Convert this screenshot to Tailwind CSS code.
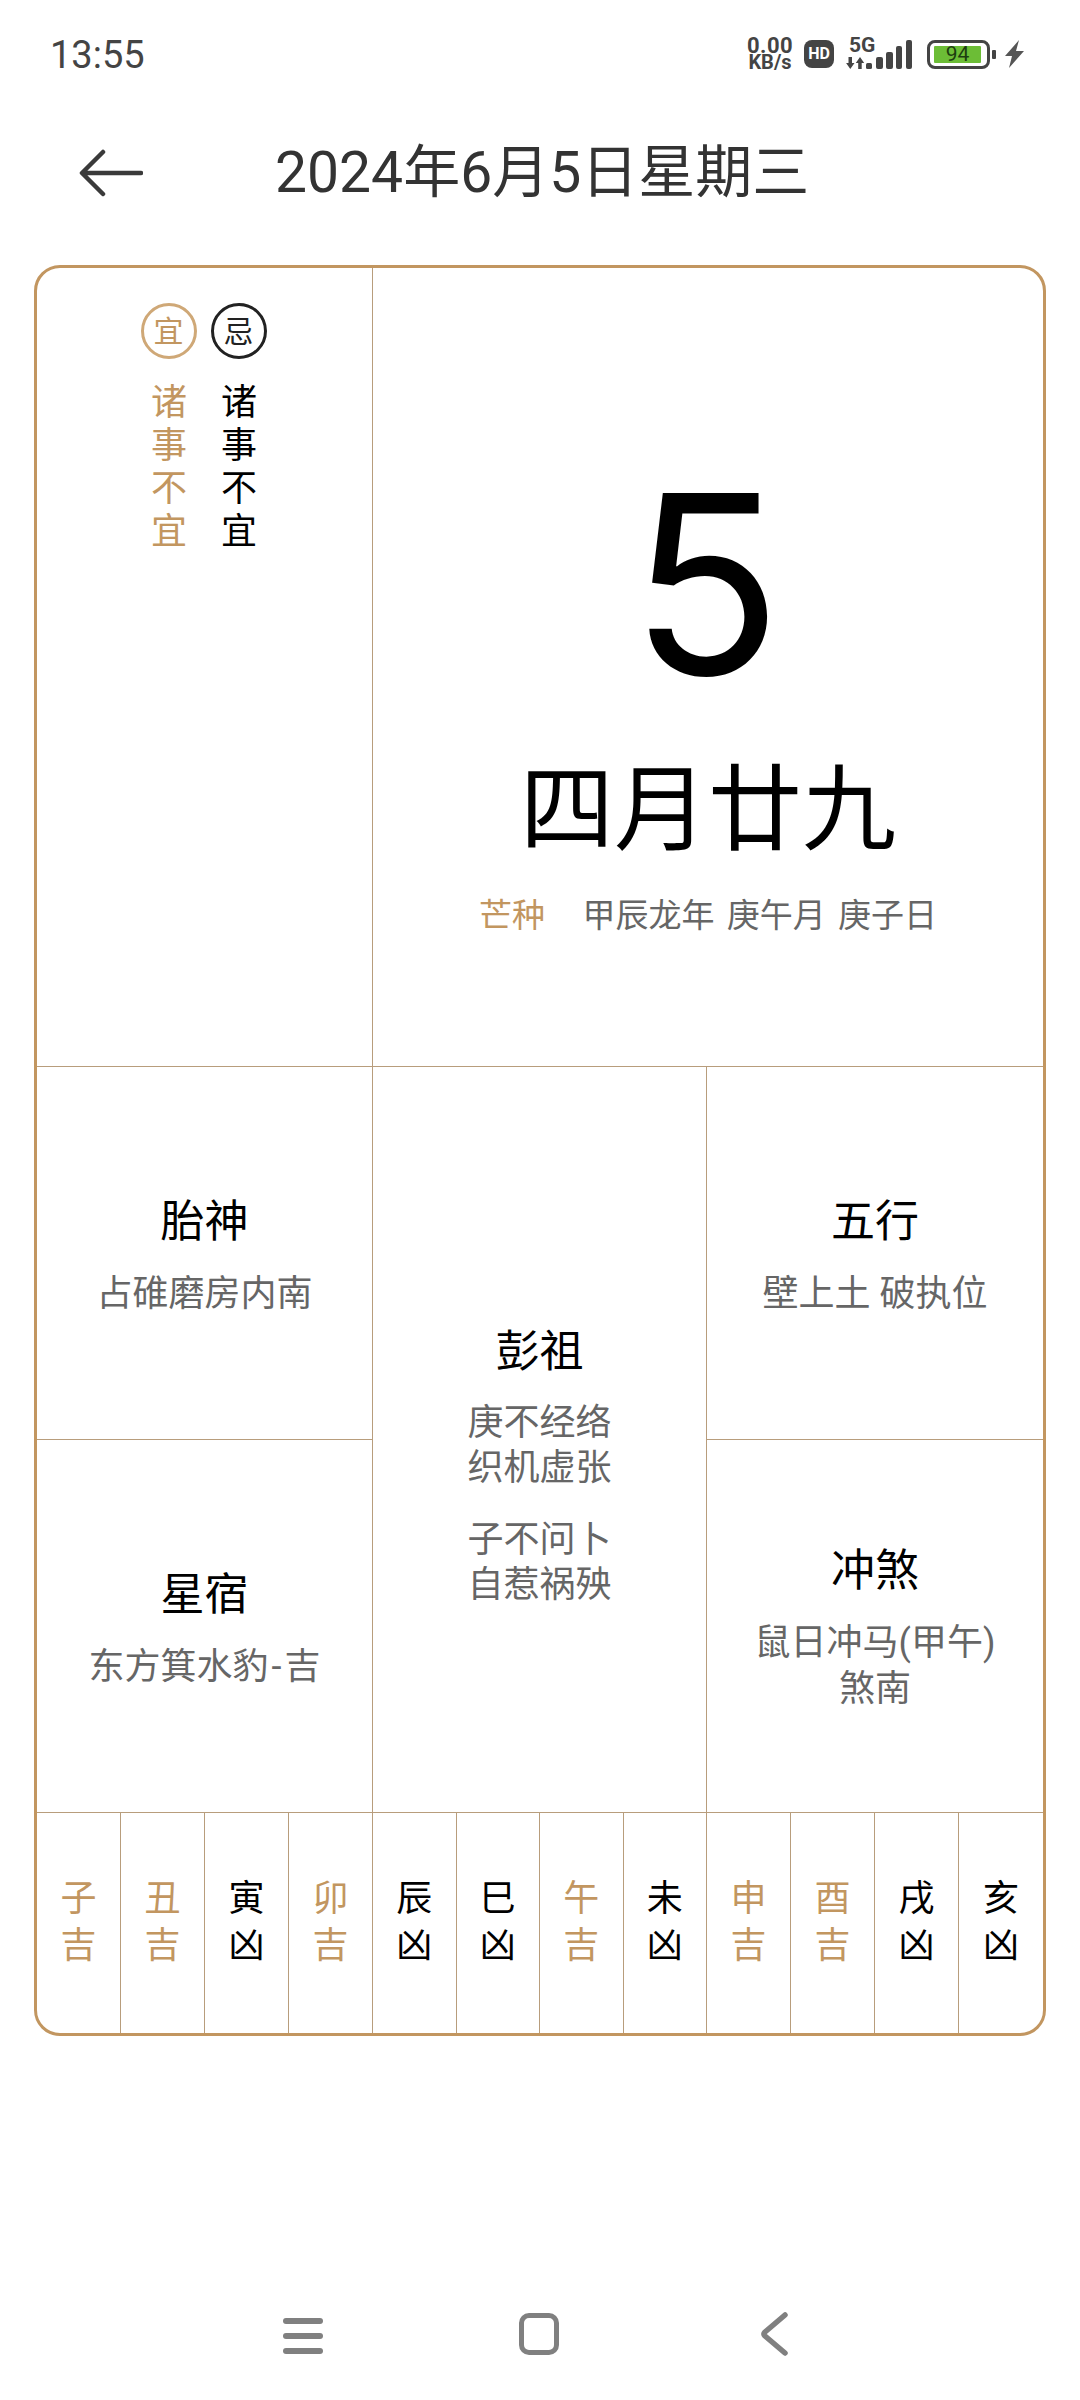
<!DOCTYPE html>
<html lang="zh-CN">
<head>
  <meta charset="UTF-8" />
  <title>黄历</title>
  <script src="https://cdn.jsdelivr.net/npm/@tailwindcss/browser@4"></script>
</head>
<body class="bg-white w-[1080px] h-[2400px] overflow-hidden flex flex-col font-['Roboto','Noto_Sans_CJK_SC',sans-serif]">
  <!-- Status bar -->
  <header class="h-[108px] shrink-0 pl-[50px] pr-[56px] flex justify-between items-center text-[#444]">
    <span class="text-[38px] leading-none mt-[1px]">13:55</span>
    <div class="flex items-center">
      <div class="w-[48px] flex flex-col items-center font-bold leading-[17px] mr-[10px]"><span class="text-[22px] tracking-[0.5px]">0.00</span><span class="text-[20px]">KB/s</span></div>
      <span class="w-[30px] h-[28px] rounded-[8px] bg-[#444] text-white text-[16px] font-bold flex items-center justify-center mr-[12px]">HD</span>
      <svg width="67" height="38" viewBox="0 -6 67 38" class="mr-[14px] -mt-[6px]" fill="#444">
        <text x="3" y="14" font-size="21" font-weight="700" font-family="Roboto">5G</text>
        <path d="M2.5 19H6v6h2.5l-4.2 6-4.2-6h2.4zM14 19l4.2 6h-2.5v6h-3.5v-6h-2.4z"/>
        <rect x="20" y="25" width="6" height="6" rx="1.5"/><rect x="30" y="19" width="7" height="12" rx="2"/><rect x="40" y="14" width="7" height="17" rx="2"/><rect x="50" y="8" width="6" height="23" rx="2"/><rect x="60" y="2" width="6" height="29" rx="2"/>
      </svg>
      <div class="w-[63px] h-[29px] border-[3px] border-[#444] rounded-[8px] px-[4px] py-[3px] mr-[2px]">
        <div class="w-[47px] h-full rounded-[1px] bg-[#6cbd36] text-[#1d3d10] text-[21px] leading-none flex items-center justify-center">94</div>
      </div>
      <div class="w-[4px] h-[9px] rounded-[1px] bg-[#444] mr-[9px]"></div>
      <svg width="19" height="28" viewBox="0 0 19 28" fill="#555"><path d="M14 0L0 16h7L4 28l15-17h-8z"/></svg>
    </div>
  </header>

  <!-- Title -->
  <nav class="h-[157px] shrink-0 flex items-start">
    <svg width="64" height="48" viewBox="0 0 64 48" class="ml-[79px] mt-[41px]" fill="none" stroke="#3a3a3a" stroke-width="4.5" stroke-linecap="round" stroke-linejoin="round">
      <path d="M62 24H4M24 3L3 24l21 21"/>
    </svg>
    <h1 class="ml-[132px] mt-[28px] text-[57px] leading-[74px] text-[#333] font-normal whitespace-nowrap">2024年6月5日星期三</h1>
  </nav>

  <!-- Almanac card -->
  <main class="ml-[34px] w-[1012px] h-[1771px] shrink-0 border-[3px] border-[#c29660] rounded-[26px] overflow-hidden flex flex-col">
    <section class="h-[799px] shrink-0 flex border-b border-[#b89d7c]">
      <div class="w-[336px] shrink-0 border-r border-[#b89d7c] pt-[35px] flex flex-col items-center">
        <div class="flex gap-[14px] mr-[2px]">
          <span class="w-[56px] h-[56px] rounded-full border-[3px] border-[#cfa877] text-[#c29660] text-[30px] flex items-center justify-center">宜</span>
          <span class="w-[56px] h-[56px] rounded-full border-[3px] border-[#222] text-[#222] text-[30px] flex items-center justify-center">忌</span>
        </div>
        <div class="flex gap-[34px] mt-[23px] mr-[1px] text-[36px] leading-[43px]">
          <div class="w-[36px] text-[#c29660]">诸<br>事<br>不<br>宜</div>
          <div class="w-[36px] text-black">诸<br>事<br>不<br>宜</div>
        </div>
      </div>
      <div class="flex-1 flex flex-col items-center">
        <div class="mt-[185px] mr-[4px] text-[250px] leading-[262px] text-black font-['Inter',sans-serif] font-normal">5</div>
        <div class="mt-[36px] text-[94px] leading-[120px] text-black">四月廿九</div>
        <div class="mt-[20px] text-[33px] leading-[50px] text-[#666] whitespace-pre [word-spacing:4px]"><span class="text-[#c29660] mr-[1px]">芒种</span>   甲辰龙年 庚午月 庚子日</div>
      </div>
    </section>

    <section class="h-[746px] shrink-0 flex border-b border-[#b89d7c]">
      <div class="w-[336px] shrink-0 border-r border-[#b89d7c] flex flex-col">
        <div class="h-[373px] border-b border-[#b89d7c] pt-[5px] flex flex-col items-center justify-center">
          <h2 class="text-[44px] leading-[60px] text-black">胎神</h2>
          <p class="mt-[17px] text-[36px] leading-[50px] text-[#666]">占碓磨房内南</p>
        </div>
        <div class="flex-1 pt-[5px] flex flex-col items-center justify-center">
          <h2 class="text-[44px] leading-[60px] text-black">星宿</h2>
          <p class="mt-[17px] text-[36px] leading-[50px] text-[#666]">东方箕水豹<span class="px-[3px]">-</span>吉</p>
        </div>
      </div>
      <div class="w-[334px] shrink-0 border-r border-[#b89d7c] flex flex-col items-center justify-center text-center pt-[50px]">
        <h2 class="text-[44px] leading-[60px] text-black">彭祖</h2>
        <p class="mt-[19px] text-[36px] leading-[45px] text-[#666]">庚不经络<br>织机虚张</p>
        <p class="mt-[27px] text-[36px] leading-[45px] text-[#666]">子不问卜<br>自惹祸殃</p>
      </div>
      <div class="flex-1 flex flex-col">
        <div class="h-[373px] border-b border-[#b89d7c] pt-[5px] flex flex-col items-center justify-center">
          <h2 class="text-[44px] leading-[60px] text-black">五行</h2>
          <p class="mt-[17px] text-[36px] leading-[50px] text-[#666]">壁上土 破执位</p>
        </div>
        <div class="flex-1 flex flex-col items-center justify-center text-center">
          <h2 class="text-[44px] leading-[60px] text-black">冲煞</h2>
          <p class="mt-[19px] text-[36px] leading-[46px] text-[#666]">鼠日冲马(甲午)<br>煞南</p>
        </div>
      </div>
    </section>

    <section class="flex-1 grid grid-cols-[repeat(4,84px)_repeat(4,83.5px)_repeat(4,1fr)] text-[36px] leading-[47px] text-center">
      <div class="border-r border-[#b89d7c] flex items-center justify-center text-[#c29660]">子<br>吉</div>
      <div class="border-r border-[#b89d7c] flex items-center justify-center text-[#c29660]">丑<br>吉</div>
      <div class="border-r border-[#b89d7c] flex items-center justify-center text-black">寅<br>凶</div>
      <div class="border-r border-[#b89d7c] flex items-center justify-center text-[#c29660]">卯<br>吉</div>
      <div class="border-r border-[#b89d7c] flex items-center justify-center text-black">辰<br>凶</div>
      <div class="border-r border-[#b89d7c] flex items-center justify-center text-black">巳<br>凶</div>
      <div class="border-r border-[#b89d7c] flex items-center justify-center text-[#c29660]">午<br>吉</div>
      <div class="border-r border-[#b89d7c] flex items-center justify-center text-black">未<br>凶</div>
      <div class="border-r border-[#b89d7c] flex items-center justify-center text-[#c29660]">申<br>吉</div>
      <div class="border-r border-[#b89d7c] flex items-center justify-center text-[#c29660]">酉<br>吉</div>
      <div class="border-r border-[#b89d7c] flex items-center justify-center text-black">戌<br>凶</div>
      <div class="flex items-center justify-center text-black">亥<br>凶</div>
    </section>
  </main>

  <!-- Navigation bar -->
  <footer class="flex-1 relative">
    <div class="absolute left-[283px] top-[282px] w-[40px] flex flex-col gap-[9px]">
      <div class="h-[6px] rounded-full bg-[#808080]"></div>
      <div class="h-[6px] rounded-full bg-[#808080]"></div>
      <div class="h-[6px] rounded-full bg-[#808080]"></div>
    </div>
    <div class="absolute left-[519px] top-[277px] w-[40px] h-[42px] border-[5px] border-[#808080] rounded-[10px]"></div>
    <svg class="absolute left-[760px] top-[275px]" width="30" height="46" viewBox="0 0 30 46" fill="none" stroke="#808080" stroke-width="5.5" stroke-linecap="round" stroke-linejoin="round"><path d="M25 4L5 21q-2 2 0 4l20 17"/></svg>
  </footer>
</body>
</html>
